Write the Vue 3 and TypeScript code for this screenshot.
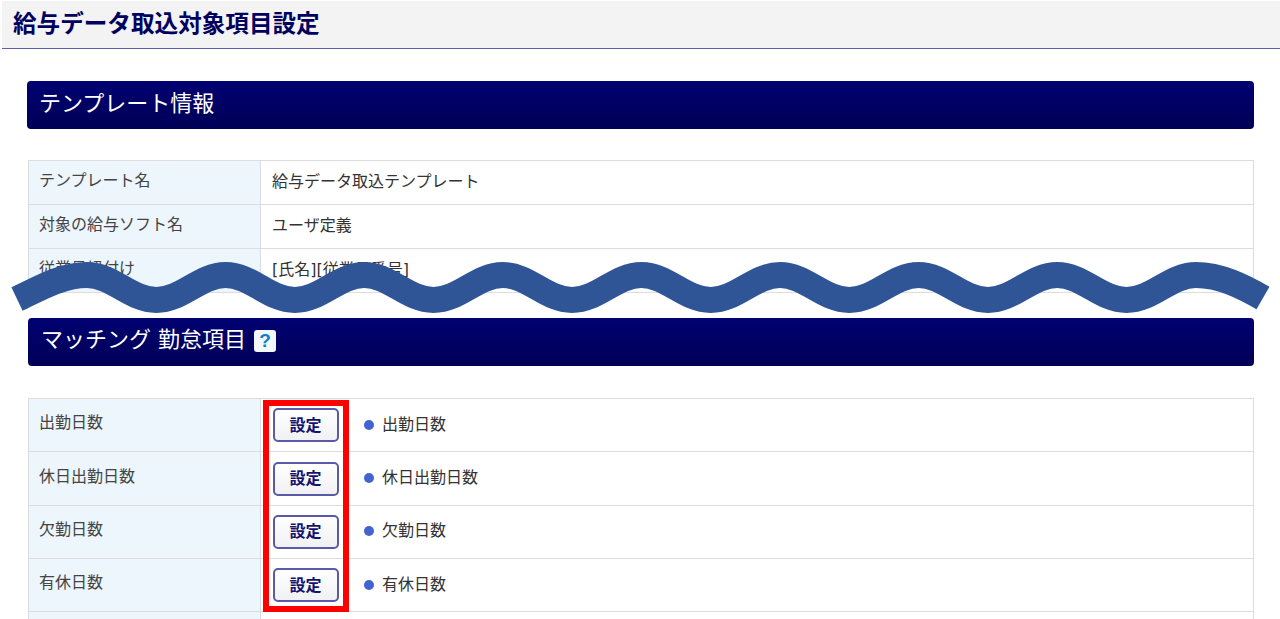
<template>
  <div class="page">
    <h1 class="page-title">給与データ取込対象項目設定</h1>

    <section class="template-info">
      <h2 class="section-head">テンプレート情報</h2>
      <div class="info-table">
        <div v-for="row in infoRows" :key="row.label" class="info-row">
          <div class="label">{{ row.label }}</div>
          <div class="value">{{ row.value }}</div>
        </div>
      </div>
    </section>

    <section class="matching">
      <h2 class="section-head">
        <span>マッチング 勤怠項目</span>
        <span class="help">?</span>
      </h2>
      <div class="match-table">
        <div v-for="item in matchItems" :key="item" class="match-row">
          <div class="label">{{ item }}</div>
          <div class="value">
            <button class="set-btn" type="button">設定</button>
            <span class="dot"></span>
            <span class="item-name">{{ item }}</span>
          </div>
        </div>
        <div class="match-row"><div class="label"></div><div class="value"></div></div>
      </div>
    </section>

    <!-- 注釈: 波線と赤枠 -->
    <svg class="wave" width="1280" height="619" viewBox="0 0 1280 619">
      <path :d="wavePath" fill="none" stroke="#2f5597" stroke-width="26" />
    </svg>
    <div class="highlight"></div>
  </div>
</template>

<script setup lang="ts">
const infoRows = [
  { label: 'テンプレート名', value: '給与データ取込テンプレート' },
  { label: '対象の給与ソフト名', value: 'ユーザ定義' },
  { label: '従業員紐付け', value: '[氏名][従業員番号]' }
];

const matchItems = ['出勤日数', '休日出勤日数', '欠勤日数', '有休日数'];

// 山と谷を交互につないだ波線
const buildWave = () => {
  const half = 69.3;
  const k = 26;
  let d = 'M17 299 C 40 288, 62 275, 87 275';
  let x = 87;
  let up = false;
  while (x + half < 1200) {
    const y0 = up ? 300 : 275;
    const y1 = up ? 275 : 300;
    d += ` C ${x + k} ${y0}, ${x + half - k} ${y1}, ${x + half} ${y1}`;
    x += half;
    up = !up;
  }
  d += ` C ${x + 25} 275, ${x + 48} 287, 1263 298`;
  return d;
};

const wavePath = buildWave();
</script>

<style scoped>
.page {
  position: relative;
  width: 1280px;
  height: 619px;
  overflow: hidden;
  background: #fff;
  font-family: "DejaVu Sans", "Noto Sans CJK JP", sans-serif;
  font-size: 16px;
  color: #444;
}

.page-title {
  box-sizing: border-box;
  height: 48px;
  margin: 1px 0 0 2px;
  padding: 0 0 6px 11px;
  display: flex;
  align-items: center;
  background: #f3f3f3;
  border-bottom: 1px solid #5c5cb0;
  color: #000060;
  font-size: 23.6px;
  font-weight: 700;
}

.template-info {
  margin: 32px 26px 0 27px;
}

.matching {
  margin: 25px 26px 0 28px;
}

.section-head {
  box-sizing: border-box;
  height: 48px;
  margin: 0;
  padding: 0 0 8px 12px;
  display: flex;
  align-items: center;
  gap: 8px;
  border-radius: 4px;
  background: linear-gradient(#000072, #000056);
  color: #fff;
  font-size: 22px;
  font-weight: 400;
}

.matching .section-head {
  padding: 0 0 10px 13px;
}

.help {
  width: 22px;
  height: 22px;
  margin-top: 8px;
  display: flex;
  align-items: center;
  justify-content: center;
  border-radius: 3px;
  background: #f4f7fa;
  color: #0d7fd0;
  font-family: "Liberation Sans", sans-serif;
  font-size: 19px;
  font-weight: 700;
}

.info-table {
  margin: 31px 0 0 1px;
  border: 1px solid #dcdcdc;
  border-bottom: none;
}

.info-row {
  display: grid;
  grid-template-columns: 232px 1fr;
  height: 44px;
  box-sizing: border-box;
  border-bottom: 1px solid #dcdcdc;
}

.match-table {
  margin-top: 32px;
  border: 1px solid #dcdcdc;
  border-bottom: none;
}

.match-row {
  display: grid;
  grid-template-columns: 232px 1fr;
  height: 53.35px;
  box-sizing: border-box;
  border-bottom: 1px solid #dcdcdc;
}

.label {
  display: flex;
  align-items: center;
  padding: 0 0 8px 10px;
  background: #edf5fd;
  border-right: 1px solid #dcdcdc;
}

.value {
  display: flex;
  align-items: center;
  padding: 0 0 6px 11px;
  color: #333;
}

.match-row .value {
  padding: 0 0 0 12px;
}

.item-name {
  padding-bottom: 5px;
}

.set-btn {
  box-sizing: border-box;
  width: 66px;
  height: 34px;
  margin-right: 25px;
  padding: 0 1px 3px 0;
  border: 2px solid #5a5aa8;
  border-radius: 5px;
  background: linear-gradient(#ffffff, #f1f1f4);
  color: #14146e;
  font-family: inherit;
  font-size: 16px;
  font-weight: 700;
}

.dot {
  width: 10px;
  height: 10px;
  margin: 0 8px 1px 0;
  border-radius: 50%;
  background: #4363d0;
}

.wave {
  position: absolute;
  left: 0;
  top: 0;
  pointer-events: none;
}

.highlight {
  position: absolute;
  left: 263px;
  top: 400px;
  box-sizing: border-box;
  width: 86px;
  height: 212px;
  border: 6px solid #ff0000;
}
</style>
